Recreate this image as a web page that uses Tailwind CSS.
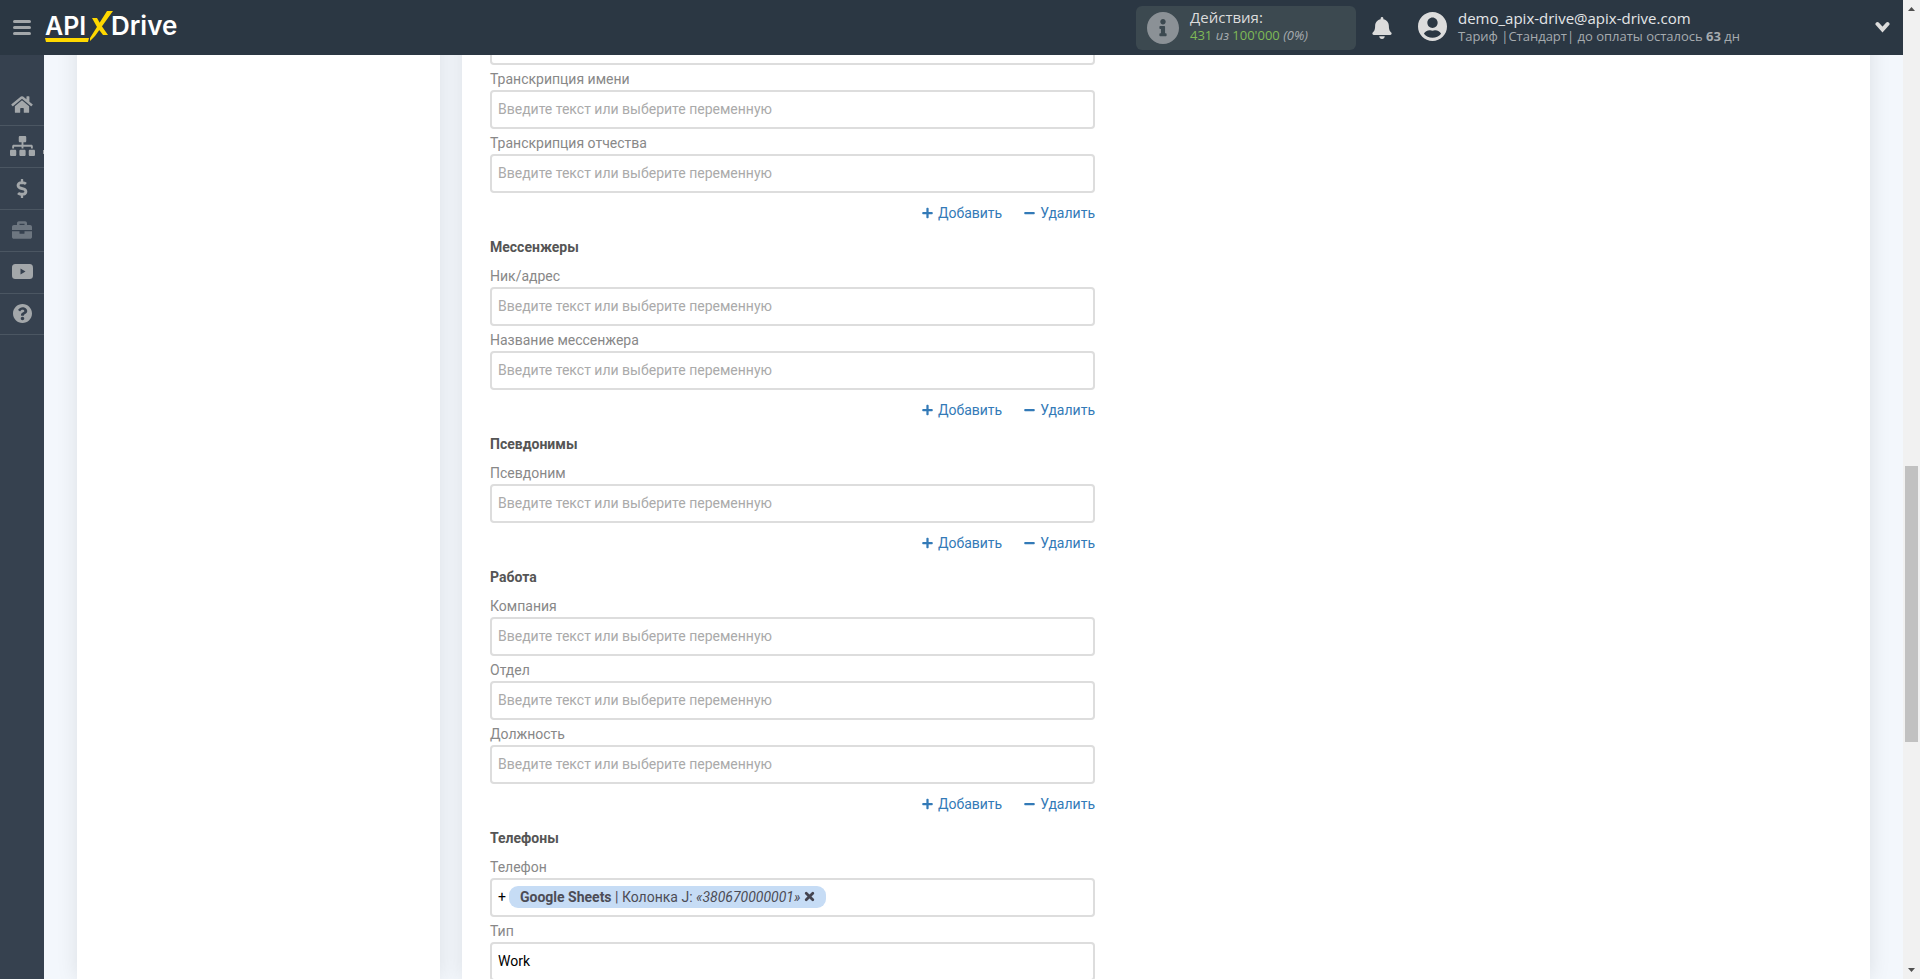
<!DOCTYPE html>
<html lang="ru">
<head>
<meta charset="utf-8">
<meta name="viewport" content="width=device-width, initial-scale=1">
<title>ApiX-Drive</title>
<script src="https://cdn.jsdelivr.net/npm/@tailwindcss/browser@4"></script>
</head>
<body class="flex h-screen overflow-hidden bg-[#f3f7fc] font-[Roboto,sans-serif] text-sm leading-5 text-[#888]">

<svg class="hidden" aria-hidden="true">
  <symbol id="plus" viewBox="0 0 448 512"><path fill="currentColor" d="M416 208H272V64c0-17.67-14.33-32-32-32h-32c-17.67 0-32 14.33-32 32v144H32c-17.67 0-32 14.33-32 32v32c0 17.67 14.33 32 32 32h144v144c0 17.67 14.33 32 32 32h32c17.67 0 32-14.33 32-32V304h144c17.67 0 32-14.33 32-32v-32c0-17.67-14.33-32-32-32z"/></symbol>
  <symbol id="minus" viewBox="0 0 448 512"><path fill="currentColor" d="M416 208H32c-17.67 0-32 14.33-32 32v32c0 17.67 14.33 32 32 32h384c17.67 0 32-14.33 32-32v-32c0-17.67-14.33-32-32-32z"/></symbol>
</svg>

<div class="relative flex min-w-0 flex-1 flex-col">
  <header class="absolute inset-x-0 top-0 z-10 flex h-[55px] items-center bg-[#2b3743] pl-[13px] font-[Open_Sans,sans-serif]">
    <button type="button" aria-label="Меню" class="flex h-[15px] w-[18px] flex-col justify-between">
      <span class="h-[3px] w-full rounded-full bg-[#a3a7aa]"></span>
      <span class="h-[3px] w-full rounded-full bg-[#a3a7aa]"></span>
      <span class="h-[3px] w-full rounded-full bg-[#a3a7aa]"></span>
    </button>
    <a href="#" aria-label="ApiXDrive" class="ml-3.5">
      <svg width="140" height="55" viewBox="0 0 140 55" font-family="Inter, sans-serif" font-weight="600" fill="#fff">
        <text x="0" y="35" font-size="25">API</text>
        <text x="66" y="35" font-size="26">Drive</text>
        <path fill="#ffd800" d="M0 38h44l-1 4H1z"/>
        <path fill="#ffd800" d="M62 11h6L50 36l-5 5v-3zM47 18h5l4 7 7 10h-5l-6-8z"/>
      </svg>
    </a>
    <div class="ml-auto flex h-11 w-[220px] shrink-0 items-center gap-[11px] rounded-md bg-[#3c4950] pl-[11px]">
      <svg class="size-8 text-[#8b9196]" viewBox="8 8 496 496"><path fill="currentColor" d="M256 8C119.043 8 8 119.083 8 256c0 136.997 111.043 248 248 248s248-111.003 248-248C504 119.083 392.957 8 256 8zm0 110c23.196 0 42 18.804 42 42s-18.804 42-42 42-42-18.804-42-42 18.804-42 42-42zm56 254c0 6.627-5.373 12-12 12h-88c-6.627 0-12-5.373-12-12v-24c0-6.627 5.373-12 12-12h12v-64h-12c-6.627 0-12-5.373-12-12v-24c0-6.627 5.373-12 12-12h64c6.627 0 12 5.373 12 12v100h12c6.627 0 12 5.373 12 12v24z"/></svg>
      <div class="pb-0.5">
        <div class="text-[15px] leading-[17px] text-[#dcdcdc]">Действия:</div>
        <div class="text-[13px] leading-[18px] text-[#7fba56]">431 <i class="text-[#a6abaf]">из</i> 100'000 <i class="text-[#a6abaf]">(0%)</i></div>
      </div>
    </div>
    <button type="button" aria-label="Уведомления" class="ml-4 shrink-0">
      <svg class="h-[22px] w-5 text-[#dcdcdc]" viewBox="0 0 448 512"><path fill="currentColor" d="M224 512c35.32 0 63.97-28.65 63.97-64H160.03c0 35.35 28.65 64 63.97 64zm215.39-149.71c-19.32-20.76-55.47-51.99-55.47-154.29 0-77.7-54.48-139.9-127.94-155.16V32c0-17.67-14.32-32-31.98-32s-31.98 14.33-31.98 32v20.84C118.56 68.1 64.08 130.3 64.08 208c0 102.3-36.15 133.53-55.47 154.29-6 6.45-8.66 14.16-8.61 21.71.11 16.4 12.98 32 32.1 32h383.8c19.12 0 32-15.6 32.1-32 .05-7.55-2.61-15.27-8.61-21.71z"/></svg>
    </button>
    <button type="button" class="ml-[26px] flex w-[485px] shrink-0 items-center pr-[13px] pb-0.5 text-left">
      <svg class="size-[29px] text-[#dcdcdc]" viewBox="0 8 496 496"><path fill="currentColor" d="M248 8C111 8 0 119 0 256s111 248 248 248 248-111 248-248S385 8 248 8zm0 96c48.6 0 88 39.4 88 88s-39.4 88-88 88-88-39.4-88-88 39.4-88 88-88zm0 344c-58.7 0-111.3-26.600-146.500-68.200 18.800-35.400 55.600-59.800 98.500-59.800 2.400 0 4.800.4 7.100 1.100 13 4.200 26.600 6.900 40.900 6.900 14.300 0 28-2.700 40.900-6.900 2.300-.7 4.700-1.100 7.100-1.100 42.900 0 79.700 24.400 98.500 59.800C359.300 421.400 306.700 448 248 448z"/></svg>
      <span class="ml-[11px] flex flex-col pt-0.5">
        <span class="text-[15px] leading-[17px] text-[#e4e6e8]">demo_apix-drive@apix-drive.com</span>
        <span class="text-[13px] leading-[18px] text-[#a6abaf]">Тариф |Стандарт| до оплаты осталось <b>63</b> дн</span>
      </span>
      <svg class="ml-auto h-3 w-[15px]" viewBox="0 0 15 12" fill="none" stroke="#dcdcdc" stroke-width="4" stroke-linecap="round"><path d="m2.500 3 5 5.500 5-5.500"/></svg>
    </button>
  </header>

  <div class="flex min-h-0 flex-1">
    <nav class="w-11 shrink-0 bg-[#36414f] pt-[84px] text-[#a3a7aa]">
      <a href="#" aria-label="Главная" class="flex h-[42px] items-center justify-center border-b border-[#4b5662]"><svg class="h-[19px] w-[22px]" viewBox="0 0 576 512"><path fill="currentColor" d="M280.370 148.260L96 300.110V464a16 16 0 0 0 16 16l112.060-.29a16 16 0 0 0 15.920-16V368a16 16 0 0 1 16-16h64a16 16 0 0 1 16 16v95.640a16 16 0 0 0 16 16.050L464 480a16 16 0 0 0 16-16V300L295.670 148.260a12.190 12.190 0 0 0-15.300 0zM571.600 251.470L488 182.560V44.050a12 12 0 0 0-12-12h-56a12 12 0 0 0-12 12v72.610L318.470 43a48 48 0 0 0-61 0L4.340 251.470a12 12 0 0 0-1.600 16.900l25.500 31A12 12 0 0 0 45.150 301l235.220-193.740a12.190 12.190 0 0 1 15.300 0L530.900 301a12 12 0 0 0 16.900-1.600l25.500-31a12 12 0 0 0-1.700-16.930z"/></svg></a>
      <a href="#" aria-label="Связи" class="relative flex h-[42px] items-center justify-center border-b border-[#4b5662] pb-0.5"><svg class="h-5 w-[25px]" viewBox="0 0 640 512"><path fill="currentColor" d="M128 352H32c-17.670 0-32 14.330-32 32v96c0 17.670 14.330 32 32 32h96c17.670 0 32-14.330 32-32v-96c0-17.670-14.330-32-32-32zm-24-80h192v48h48v-48h192v48h48v-57.590c0-21.170-17.230-38.410-38.410-38.410H344v-64h40c17.670 0 32-14.330 32-32V32c0-17.670-14.330-32-32-32H256c-17.670 0-32 14.330-32 32v96c0 17.670 14.330 32 32 32h40v64H94.410C73.230 224 56 241.230 56 262.410V320h48v-48zm264 80h-96c-17.670 0-32 14.330-32 32v96c0 17.670 14.330 32 32 32h96c17.670 0 32-14.330 32-32v-96c0-17.670-14.330-32-32-32zm240 0h-96c-17.670 0-32 14.330-32 32v96c0 17.670 14.330 32 32 32h96c17.670 0 32-14.330 32-32v-96c0-17.670-14.330-32-32-32z"/></svg><span class="absolute top-6 right-0 h-1 w-px bg-[#a3a7aa]"></span></a>
      <a href="#" aria-label="Тарифы" class="flex h-[42px] items-center justify-center border-b border-[#4b5662]"><svg class="h-[19px] w-3" viewBox="0 0 288 512"><path fill="currentColor" d="M209.200 233.400l-108-31.600C88.700 198.200 80 186.500 80 173.500c0-16.300 13.200-29.500 29.500-29.500h66.300c12.200 0 24.200 3.700 34.200 10.500 6.100 4.100 14.300 3.100 19.500-2l34.800-34c7.100-6.900 6.100-18.400-1.800-24.500C238 74.800 207.400 64.100 176 64V16c0-8.800-7.200-16-16-16h-32c-8.800 0-16 7.200-16 16v48h-2.500C45.800 64-5.400 118.700.5 183.600c4.200 46.100 39.400 83.600 83.800 96.600l102.500 30c12.500 3.700 21.200 15.300 21.200 28.300 0 16.300-13.200 29.500-29.500 29.500h-66.300C100 368 88 364.300 78 357.500c-6.100-4.100-14.300-3.100-19.500 2l-34.800 34c-7.100 6.900-6.100 18.400 1.800 24.500 24.500 19.200 55.100 29.900 86.500 30v48c0 8.800 7.200 16 16 16h32c8.800 0 16-7.200 16-16v-48.200c46.600-.9 90.300-28.600 105.700-72.700 21.500-61.600-14.600-124.800-72.500-141.700z"/></svg></a>
      <a href="#" aria-label="Услуги" class="flex h-[42px] items-center justify-center border-b border-[#4b5662] pb-0.5 text-[#6d7680]"><svg class="size-5" viewBox="0 0 512 512"><path fill="currentColor" d="M320 336c0 8.840-7.160 16-16 16h-96c-8.840 0-16-7.160-16-16v-48H0v144c0 25.600 22.400 48 48 48h416c25.600 0 48-22.400 48-48V288H320v48zm144-208h-80V80c0-25.600-22.400-48-48-48H176c-25.600 0-48 22.400-48 48v48H48c-25.600 0-48 22.400-48 48v80h512v-80c0-25.600-22.400-48-48-48zm-144 0H192V96h128v32z"/></svg></a>
      <a href="#" aria-label="Видео" class="flex h-[42px] items-center justify-center border-b border-[#4b5662] pb-0.5"><svg class="h-[15px] w-[21px]" viewBox="0 0 21 15"><path fill="currentColor" fill-rule="evenodd" d="M4 0h13c3 0 4 1 4 4v7c0 3-1 4-4 4H4c-3 0-4-1-4-4V4c0-3 1-4 4-4zm4.500 4.500v6l5-3z"/></svg></a>
      <a href="#" aria-label="Помощь" class="flex h-[41px] items-center justify-center border-b border-[#4b5662] pb-0.5"><svg class="size-[19px]" viewBox="8 8 496 496"><path fill="currentColor" d="M504 256c0 136.997-111.043 248-248 248S8 392.997 8 256C8 119.083 119.043 8 256 8s248 111.083 248 248zM262.655 90c-54.497 0-89.255 22.957-116.549 63.758-3.536 5.286-2.353 12.415 2.715 16.258l34.699 26.310c5.205 3.947 12.621 3.008 16.665-2.122 17.864-22.658 30.113-35.797 57.303-35.797 20.429 0 45.698 13.148 45.698 32.958 0 14.976-12.363 22.667-32.534 33.976C247.128 238.528 216 254.941 216 296v4c0 6.627 5.373 12 12 12h56c6.627 0 12-5.373 12-12v-1.333c0-28.462 83.186-29.647 83.186-106.667 0-58.002-60.165-102-116.531-102zM256 338c-25.365 0-46 20.635-46 46 0 25.364 20.635 46 46 46s46-20.636 46-46c0-25.365-20.635-46-46-46z"/></svg></a>
    </nav>

    <main class="flex min-w-0 flex-1 gap-[22px] overflow-hidden px-[33px]">
      <aside class="w-[363px] shrink-0 bg-white shadow-[0_0_20px_rgba(0,0,0,0.1)]"></aside>
      <section class="min-w-0 flex-1 bg-white px-7 pt-[26px] shadow-[0_0_20px_rgba(0,0,0,0.1)]">
        <form class="flex w-full max-w-[605px] flex-col">
          <input aria-label="Транскрипция фамилии" class="h-[39px] shrink-0 rounded border-2 border-[#ddd] px-1.5">
          <label for="f1" class="pt-1 pb-px">Транскрипция имени</label>
          <input id="f1" placeholder="Введите текст или выберите переменную" class="h-[39px] rounded border-2 border-[#ddd] px-1.5 pb-0.5 text-black placeholder:text-[#aaa]">
          <label for="f2" class="pt-1 pb-px">Транскрипция отчества</label>
          <input id="f2" placeholder="Введите текст или выберите переменную" class="h-[39px] rounded border-2 border-[#ddd] px-1.5 pb-0.5 text-black placeholder:text-[#aaa]">
          <div class="mt-2.5 flex justify-end gap-[22px] text-[#337ab7]">
            <button type="button" class="flex items-center gap-[5px]"><svg class="h-3 w-[11px]"><use href="#plus"/></svg>Добавить</button>
            <button type="button" class="flex items-center gap-[5px]"><svg class="h-3 w-[11px]"><use href="#minus"/></svg>Удалить</button>
          </div>

          <h2 class="mt-3.5 mb-[5px] font-bold text-[#555]">Мессенжеры</h2>
          <label for="f3" class="pt-1 pb-px">Ник/адрес</label>
          <input id="f3" placeholder="Введите текст или выберите переменную" class="h-[39px] rounded border-2 border-[#ddd] px-1.5 pb-0.5 text-black placeholder:text-[#aaa]">
          <label for="f4" class="pt-1 pb-px">Название мессенжера</label>
          <input id="f4" placeholder="Введите текст или выберите переменную" class="h-[39px] rounded border-2 border-[#ddd] px-1.5 pb-0.5 text-black placeholder:text-[#aaa]">
          <div class="mt-2.5 flex justify-end gap-[22px] text-[#337ab7]">
            <button type="button" class="flex items-center gap-[5px]"><svg class="h-3 w-[11px]"><use href="#plus"/></svg>Добавить</button>
            <button type="button" class="flex items-center gap-[5px]"><svg class="h-3 w-[11px]"><use href="#minus"/></svg>Удалить</button>
          </div>

          <h2 class="mt-3.5 mb-[5px] font-bold text-[#555]">Псевдонимы</h2>
          <label for="f5" class="pt-1 pb-px">Псевдоним</label>
          <input id="f5" placeholder="Введите текст или выберите переменную" class="h-[39px] rounded border-2 border-[#ddd] px-1.5 pb-0.5 text-black placeholder:text-[#aaa]">
          <div class="mt-2.5 flex justify-end gap-[22px] text-[#337ab7]">
            <button type="button" class="flex items-center gap-[5px]"><svg class="h-3 w-[11px]"><use href="#plus"/></svg>Добавить</button>
            <button type="button" class="flex items-center gap-[5px]"><svg class="h-3 w-[11px]"><use href="#minus"/></svg>Удалить</button>
          </div>

          <h2 class="mt-3.5 mb-[5px] font-bold text-[#555]">Работа</h2>
          <label for="f6" class="pt-1 pb-px">Компания</label>
          <input id="f6" placeholder="Введите текст или выберите переменную" class="h-[39px] rounded border-2 border-[#ddd] px-1.5 pb-0.5 text-black placeholder:text-[#aaa]">
          <label for="f7" class="pt-1 pb-px">Отдел</label>
          <input id="f7" placeholder="Введите текст или выберите переменную" class="h-[39px] rounded border-2 border-[#ddd] px-1.5 pb-0.5 text-black placeholder:text-[#aaa]">
          <label for="f8" class="pt-1 pb-px">Должность</label>
          <input id="f8" placeholder="Введите текст или выберите переменную" class="h-[39px] rounded border-2 border-[#ddd] px-1.5 pb-0.5 text-black placeholder:text-[#aaa]">
          <div class="mt-2.5 flex justify-end gap-[22px] text-[#337ab7]">
            <button type="button" class="flex items-center gap-[5px]"><svg class="h-3 w-[11px]"><use href="#plus"/></svg>Добавить</button>
            <button type="button" class="flex items-center gap-[5px]"><svg class="h-3 w-[11px]"><use href="#minus"/></svg>Удалить</button>
          </div>

          <h2 class="mt-3.5 mb-[5px] font-bold text-[#555]">Телефоны</h2>
          <label for="f9" class="pt-1 pb-px">Телефон</label>
          <div class="flex h-[39px] items-center rounded border-2 border-[#ddd] px-1.5 pb-0.5 text-black">
            <span class="mr-[3px]">+</span>
            <span class="flex h-[22px] shrink-0 items-center rounded-[9px] bg-[#c6dcf5] px-[11px] whitespace-pre text-[#4c4c55]"><b>Google Sheets</b> | Колонка J: <i>«380670000001»</i><button type="button" aria-label="Убрать" class="ml-1"><svg class="size-[11px]" viewBox="0 0 10 10" stroke="#444450" stroke-width="2.500" stroke-linecap="round"><path d="m2 2 6 6M8 2 2 8"/></svg></button></span>
            <input id="f9" class="min-w-0 flex-1 outline-none">
          </div>
          <label for="f10" class="pt-1 pb-px">Тип</label>
          <input id="f10" value="Work" class="h-[39px] rounded border-2 border-[#ddd] px-1.5 pb-0.5 text-black">
        </form>
      </section>
    </main>
  </div>
</div>

<div class="flex w-[17px] shrink-0 flex-col items-center bg-[#f1f1f1] py-[7px]" aria-hidden="true">
  <svg class="h-1 w-[7px]" viewBox="0 0 7 4"><path fill="#505050" d="M3.500 0 7 4H0z"/></svg>
  <div class="grid w-[13px] flex-1 grid-rows-[455fr_276fr_226fr]"><span class="row-start-2 bg-[#c1c1c1]"></span></div>
  <svg class="h-1 w-[7px]" viewBox="0 0 7 4"><path fill="#505050" d="M0 0h7L3.500 4z"/></svg>
</div>

</body>
</html>
